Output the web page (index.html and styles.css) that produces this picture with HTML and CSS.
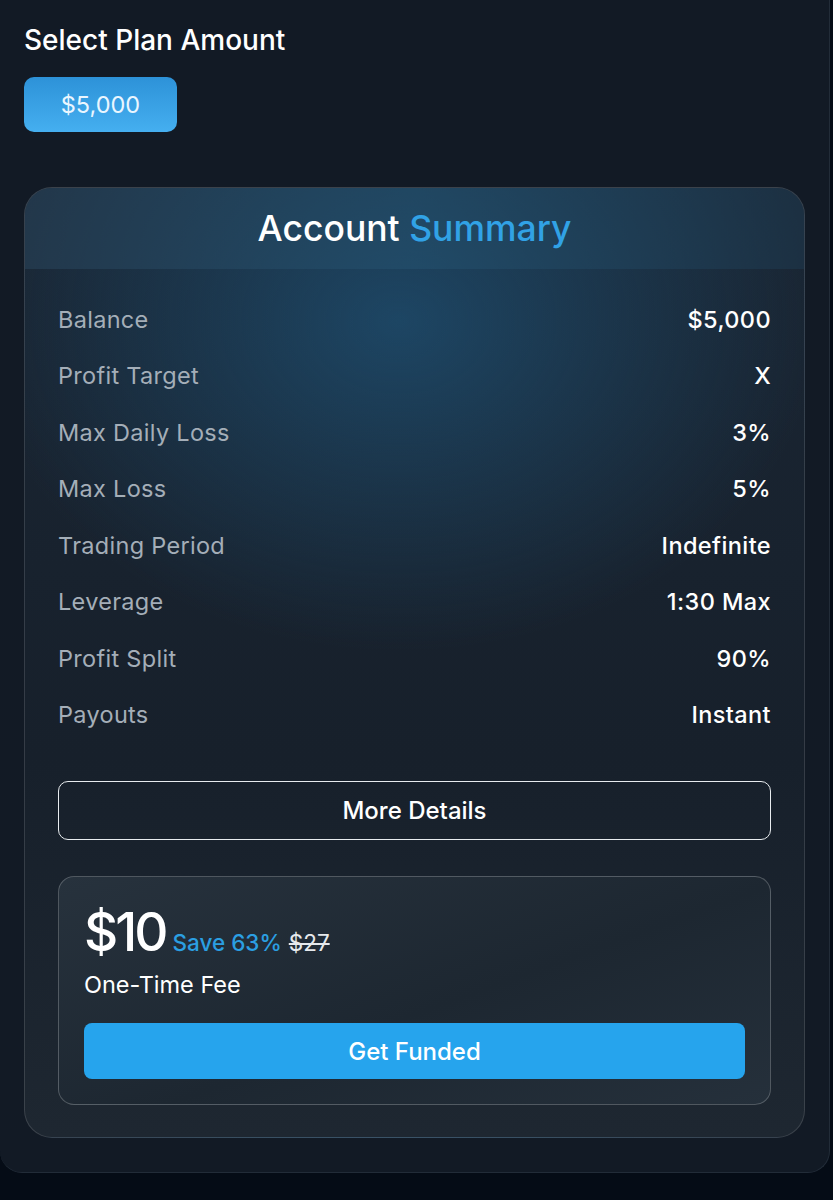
FILE: index.html
```html
<!DOCTYPE html>
<html lang="en">
<head>
    <meta charset="UTF-8">
    <meta name="viewport" content="width=device-width, initial-scale=1.0">
    <title>Select Plan</title>
    <link rel="stylesheet" href="styles.css">
</head>
<body>

    <div class="panel">
        <h3 class="section-title">Select Plan Amount</h3>
        <div class="plan-options">
            <button type="button" class="plan-btn active">$5,000</button>
        </div>

        <div class="summary-card">
            <div class="summary-head">
                <h2>Account <span class="accent">Summary</span></h2>
            </div>

            <div class="summary-body">
                <ul class="rules">
                    <li><span class="label">Balance</span><span class="value">$5,000</span></li>
                    <li><span class="label">Profit Target</span><span class="value">X</span></li>
                    <li><span class="label">Max Daily Loss</span><span class="value">3%</span></li>
                    <li><span class="label">Max Loss</span><span class="value">5%</span></li>
                    <li><span class="label">Trading Period</span><span class="value">Indefinite</span></li>
                    <li><span class="label">Leverage</span><span class="value">1:30 Max</span></li>
                    <li><span class="label">Profit Split</span><span class="value">90%</span></li>
                    <li><span class="label">Payouts</span><span class="value">Instant</span></li>
                </ul>

                <button type="button" class="details-btn">More Details</button>

                <div class="price-box">
                    <div class="price-line">
                        <span class="price">$10</span>
                        <span class="save">Save 63%</span>
                        <s class="old-price">$27</s>
                    </div>
                    <p class="fee">One-Time Fee</p>
                    <button type="button" class="fund-btn">Get Funded</button>
                </div>
            </div>
        </div>
    </div>

</body>
</html>
```

FILE: styles.css
```css
body {
    font-family: "Inter", "Noto Sans", sans-serif;
    background-color: #050c16;
    color: #fff;
    margin: 0;
    min-height: 1200px;
}

.panel {
    background-color: #121a25;
    padding: 22px 24px 34px 24px;
    margin-right: 3px;
    border-radius: 0 0 22px 22px;
    border: 1px solid #222c38;
    border-top: none;
    border-left: none;
}

.section-title {
    margin: 0;
    font-size: 28px;
    font-weight: 500;
    line-height: 36px;
}

.plan-options {
    margin-top: 19px;
    display: flex;
    gap: 12px;
}

.plan-btn {
    width: 153px;
    height: 55px;
    border: none;
    border-radius: 10px;
    background: linear-gradient(180deg, #2d92d8, #45aff0);
    color: #eaf6ff;
    font-family: inherit;
    font-size: 23.5px;
}

.summary-card {
    margin-top: 55px;
    border: 1px solid rgba(255, 255, 255, 0.13);
    border-radius: 28px;
    overflow: hidden;
    background:
        radial-gradient(ellipse 420px 330px at 48% 14%, rgba(30, 78, 112, 0.8), rgba(30, 78, 112, 0) 100%),
        linear-gradient(180deg, #1a2634 0%, #17202b 60%, #1e2731 100%);
}

.summary-head {
    height: 81px;
    display: flex;
    align-items: center;
    justify-content: center;
    background: linear-gradient(90deg, rgba(40, 66, 88, 0.6), rgba(36, 82, 112, 0.55) 50%, rgba(30, 58, 80, 0.5));
}

.summary-head h2 {
    margin: 0;
    font-size: 35.5px;
    font-weight: 500;
}

.accent {
    color: #31a2e6;
}

.summary-body {
    padding: 22px 33px 32px;
}

.rules {
    list-style: none;
    margin: 0;
    padding: 0;
}

.rules li {
    display: flex;
    justify-content: space-between;
    align-items: center;
    height: 56.5px;
    font-size: 23.5px;
}

.label {
    color: #a4aeb8;
    letter-spacing: 0.3px;
}

.value {
    font-weight: 500;
    letter-spacing: 0.4px;
}

.details-btn {
    display: block;
    width: 100%;
    height: 59px;
    margin-top: 38px;
    background: transparent;
    border: 1.5px solid #e8ecef;
    border-radius: 10px;
    color: #fff;
    font-family: inherit;
    font-size: 24px;
    font-weight: 500;
}

.price-box {
    margin-top: 36px;
    padding: 25px 25px 25px;
    border: 1px solid rgba(255, 255, 255, 0.22);
    border-radius: 16px;
    background: linear-gradient(160deg, #27323d, #1d2731 55%, #25303b);
}

.price-line {
    display: flex;
    align-items: baseline;
    gap: 7px;
    line-height: 60px;
}

.price {
    font-size: 53px;
    font-weight: 500;
    letter-spacing: -3px;
}

.save {
    color: #2b9fe2;
    font-size: 22.5px;
    font-weight: 500;
}

.old-price {
    color: #e6e9ec;
    font-size: 22.5px;
}

.fee {
    margin: -3px 0 0;
    font-size: 23.5px;
    line-height: 30px;
}

.fund-btn {
    display: block;
    width: 100%;
    height: 56px;
    margin-top: 23px;
    background-color: #26a4ed;
    border: none;
    border-radius: 8px;
    color: #fff;
    font-family: inherit;
    font-size: 24px;
    font-weight: 500;
}
```
